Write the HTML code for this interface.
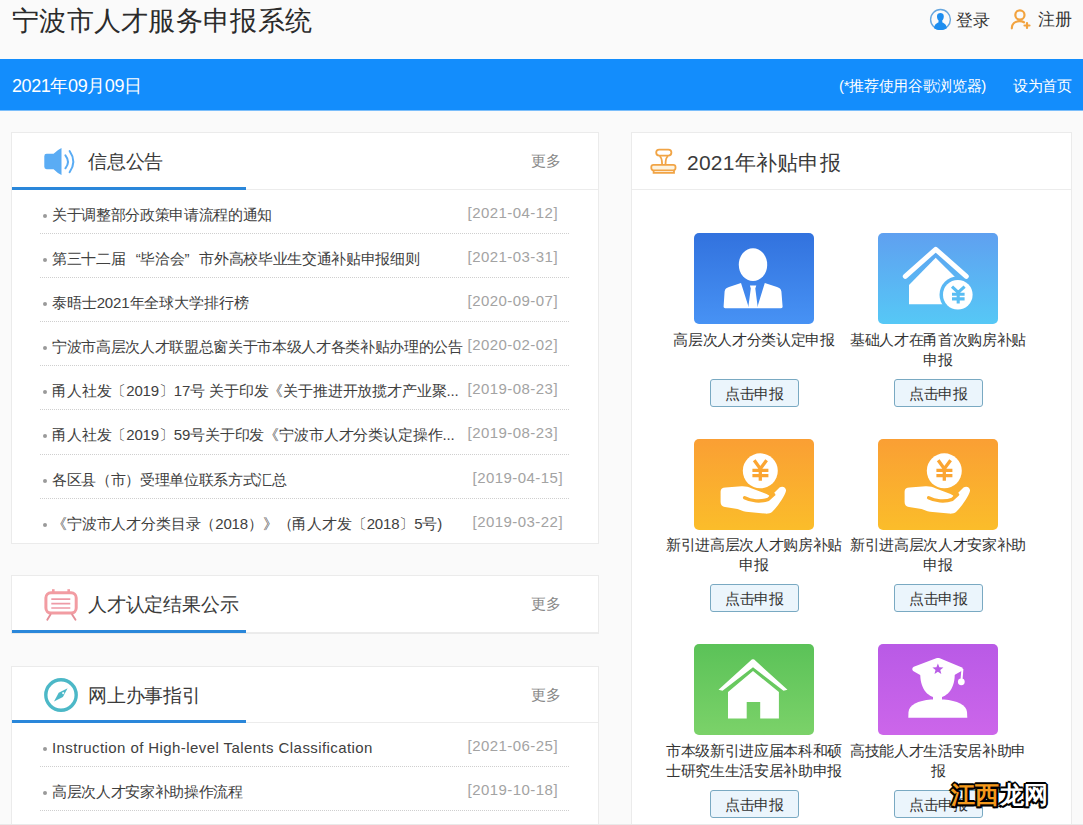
<!DOCTYPE html>
<html><head><meta charset="utf-8">
<style>
*{margin:0;padding:0;box-sizing:border-box}
html,body{width:1083px;height:825px;overflow:hidden}
body{background:#fafafa;font-family:"Liberation Sans",sans-serif;position:relative;color:#333}
.abs{position:absolute;white-space:nowrap}
#title{left:12px;top:3.5px;font-size:27px;letter-spacing:0.3px;line-height:34px;color:#2b2b2b}
#bar{position:absolute;left:0;top:59px;width:1083px;height:51px;background:#138dfc;color:#fff;box-shadow:0 1px 0 rgba(19,141,252,0.55)}
.panel{position:absolute;background:#fff;border:1px solid #ebebeb}
.ph{position:absolute;left:0;top:0;width:100%;height:57px;border-bottom:1px solid #ececec}
.ph .ul{position:absolute;left:0;bottom:-1px;width:234px;height:3px;background:#2a87da}
.ph .t{position:absolute;left:76px;top:14.5px;font-size:19px;letter-spacing:-0.2px;line-height:28px;color:#3a3a3a}
.ph .more{position:absolute;left:519px;top:17px;font-size:15px;letter-spacing:-0.33px;line-height:22px;color:#888}
.li{position:absolute;left:28px;width:529px;height:44px;border-bottom:1px dotted #cfcfcf}
.li .dot{position:absolute;left:3px;top:23.5px;width:4px;height:4px;border-radius:50%;background:#9a9a9a}
.li .tx{position:absolute;left:12px;top:14px;font-size:15px;letter-spacing:-0.33px;line-height:22px;color:#404040;white-space:nowrap}
.li .dt{position:absolute;right:11px;top:11.5px;letter-spacing:0.45px;font-size:15px;line-height:22px;color:#a3a3a3;white-space:nowrap}
.tile{position:absolute;width:120px;height:91px;border-radius:5px;overflow:hidden}
.lab{position:absolute;width:184px;text-align:center;font-size:15px;letter-spacing:-0.33px;line-height:20px;color:#333}
.btn{position:absolute;width:89px;height:28px;border:1px solid #79a9c2;border-radius:3px;background:#ebf5fc;font-size:15px;letter-spacing:-0.33px;line-height:27px;text-align:center;color:#333}
.q{display:inline-block;width:1em;text-align:right}.q2{text-align:left}
#wm{text-shadow:0 0 1px #000, -2px 0 0 #000, 2px 0 0 #000, 0 -2px 0 #000, 0 2px 0 #000, -1.5px -1.5px 0 #000, 1.5px -1.5px 0 #000, -1.5px 1.5px 0 #000, 1.5px 1.5px 0 #000}
</style></head><body>
<div id="title" class="abs">宁波市人才服务申报系统</div>
<div class="abs" style="left:956px;top:9px;font-size:17px;letter-spacing:0.3px;line-height:24px;color:#333">登录</div>
<div class="abs" style="left:1038px;top:8px;font-size:17px;letter-spacing:0.3px;line-height:24px;color:#333">注册</div>
<div id="bar">
  <div class="abs" style="left:12px;top:15.5px;font-size:18px;letter-spacing:-0.4px;line-height:22px">2021年09月09日</div>
  <div class="abs" style="left:839px;top:16px;font-size:15px;letter-spacing:-0.33px;line-height:22px">(*推荐使用谷歌浏览器)</div>
  <div class="abs" style="left:1013px;top:16px;font-size:15px;letter-spacing:-0.33px;line-height:22px">设为首页</div>
</div>

<!-- panel 1 -->
<div class="panel" style="left:11px;top:132px;width:588px;height:412px">
  <div class="ph"><div class="ul"></div><div class="t">信息公告</div><div class="more">更多</div></div>
  <div class="li" style="top:57px"><div class="dot"></div><div class="tx">关于调整部分政策申请流程的通知</div><div class="dt">[2021-04-12]</div></div>
  <div class="li" style="top:101px"><div class="dot"></div><div class="tx">第三十二届<span class="q">“</span>毕洽会<span class="q q2">”</span>市外高校毕业生交通补贴申报细则</div><div class="dt">[2021-03-31]</div></div>
  <div class="li" style="top:145px"><div class="dot"></div><div class="tx" style="letter-spacing:-0.12px">泰晤士2021年全球大学排行榜</div><div class="dt">[2020-09-07]</div></div>
  <div class="li" style="top:189px"><div class="dot"></div><div class="tx">宁波市高层次人才联盟总窗关于市本级人才各类补贴办理的公告</div><div class="dt">[2020-02-02]</div></div>
  <div class="li" style="top:233px"><div class="dot"></div><div class="tx" style="letter-spacing:-0.16px">甬人社发〔2019〕17号 关于印发《关于推进开放揽才产业聚...</div><div class="dt">[2019-08-23]</div></div>
  <div class="li" style="top:277px;height:45px"><div class="dot"></div><div class="tx" style="letter-spacing:-0.16px">甬人社发〔2019〕59号关于印发《宁波市人才分类认定操作...</div><div class="dt">[2019-08-23]</div></div>
  <div class="li" style="top:322px"><div class="dot"></div><div class="tx">各区县（市）受理单位联系方式汇总</div><div class="dt" style="right:6px">[2019-04-15]</div></div>
  <div class="li" style="top:366px;border-bottom:0"><div class="dot"></div><div class="tx" style="letter-spacing:-0.16px">《宁波市人才分类目录（2018）》（甬人才发〔2018〕5号)</div><div class="dt" style="right:6px">[2019-03-22]</div></div>
</div>

<!-- panel 2 -->
<div class="panel" style="left:11px;top:575px;width:588px;height:59px">
  <div class="ph"><div class="ul"></div><div class="t">人才认定结果公示</div><div class="more">更多</div></div>
</div>

<!-- panel 3 -->
<div class="panel" style="left:11px;top:666px;width:588px;height:200px">
  <div class="ph" style="height:56px"><div class="ul"></div><div class="t">网上办事指引</div><div class="more">更多</div></div>
  <div class="li" style="top:56px"><div class="dot"></div><div class="tx" style="letter-spacing:0.42px">Instruction of High-level Talents Classification</div><div class="dt">[2021-06-25]</div></div>
  <div class="li" style="top:100px"><div class="dot"></div><div class="tx">高层次人才安家补助操作流程</div><div class="dt">[2019-10-18]</div></div>
</div>

<!-- right panel -->
<div class="panel" style="left:631px;top:132px;width:441px;height:720px">
  <div class="ph" style="border-bottom-color:#ececec"><div class="t" style="left:55px;top:15.5px;font-size:21px;letter-spacing:0.25px">2021年补贴申报</div></div>
</div>

<div class="tile" style="left:694px;top:233px;background:linear-gradient(#3272de,#4792f4)"></div>
<div class="tile" style="left:878px;top:233px;background:linear-gradient(#5fa0f0,#56c8f6)"></div>
<div class="tile" style="left:694px;top:439px;background:linear-gradient(#fa9f34,#fbbd2a)"></div>
<div class="tile" style="left:878px;top:439px;background:linear-gradient(#fa9f34,#fbbd2a)"></div>
<div class="tile" style="left:694px;top:644px;background:linear-gradient(#5bc258,#7bd269)"></div>
<div class="tile" style="left:878px;top:644px;background:linear-gradient(#b95ae6,#cc66ea)"></div>

<div class="lab" style="left:662px;top:329.5px">高层次人才分类认定申报</div>
<div class="lab" style="left:846px;top:329.5px">基础人才在甬首次购房补贴申报</div>
<div class="lab" style="left:662px;top:534.5px">新引进高层次人才购房补贴申报</div>
<div class="lab" style="left:846px;top:534.5px">新引进高层次人才安家补助申报</div>
<div class="lab" style="left:662px;top:740.5px">市本级新引进应届本科和硕士研究生生活安居补助申报</div>
<div class="lab" style="left:846px;top:740.5px">高技能人才生活安居补助申报</div>

<div class="btn" style="left:710px;top:379px">点击申报</div>
<div class="btn" style="left:894px;top:379px">点击申报</div>
<div class="btn" style="left:710px;top:584px">点击申报</div>
<div class="btn" style="left:894px;top:584px">点击申报</div>
<div class="btn" style="left:710px;top:790px">点击申报</div>
<div class="btn" style="left:894px;top:790px">点击申报</div>


<svg width="1083" height="825" viewBox="0 0 1083 825" style="position:absolute;left:0;top:0">
<defs>
 <mask id="coinmask"><rect x="878" y="233" width="120" height="91" fill="#fff"/><circle cx="957.8" cy="294.7" r="18.3" fill="#000"/></mask>
</defs>
<!-- login icon -->
<circle cx="940.5" cy="19.4" r="9.9" fill="none" stroke="#66a6de" stroke-width="1.4"/>
<path fill="#1d8ef0" d="M934,28.3 C934.3,24.6 936.5,23.4 938.4,22.5 L938.6,20.6 C937.5,19.6 937,18 937,16.3 C937,13.9 938.5,12.9 940.4,12.9 C942.3,12.9 943.8,13.9 943.8,16.3 C943.8,18 943.3,19.6 942.2,20.6 L942.4,22.5 C944.3,23.4 946.6,24.6 946.9,28.3 C945,29.6 942.8,30.1 940.4,30.1 C938,30.1 935.8,29.6 934,28.3 Z"/>
<!-- register icon -->
<g fill="none" stroke="#f2a33f" stroke-width="2.2" stroke-linecap="round">
 <circle cx="1019.9" cy="15" r="4.6"/>
 <path d="M1011.8,28.3 C1011.8,24 1015,21.2 1019.5,21.2 C1021.3,21.2 1022.8,21.6 1024,22.3"/>
 <path d="M1024.5,25.5 H1029.5 M1027,23 V28"/>
</g>
<!-- speaker -->
<g fill="#5aacf4">
 <path d="M44.3,156.2 Q44.3,153.8 46.6,153.8 L53.6,153.8 Q57.5,149.8 61.5,148 L61.5,175 Q57.5,173.2 53.6,169.2 L46.6,169.2 Q44.3,169.2 44.3,166.8 Z"/>
</g>
<g fill="none" stroke="#5aacf4" stroke-width="2" stroke-linecap="round">
 <path d="M65.4,155.3 Q70.6,161.8 65.4,168.3"/>
 <path d="M69.6,151 Q77,161.6 69.6,172.3"/>
</g>
<!-- tv -->
<g fill="none" stroke="#f29ca2">
 <rect x="45.9" y="592.8" width="30.3" height="20.3" rx="5" stroke-width="3"/>
 <path d="M51.3,599.1 H70.3 M51.3,603.6 H70.3 M51.3,608 H70.3" stroke-width="1.6" stroke="#ee9aa6"/>
 <path d="M50.5,614.5 L47.3,619.8 M72.1,614.5 L75.5,619.8" stroke-width="1.9" stroke-linecap="round" stroke="#e48f98"/>
</g>
<rect x="52" y="589.2" width="2.6" height="3" fill="#f29ca2"/>
<rect x="67.4" y="589.2" width="2.6" height="3" fill="#f29ca2"/>
<!-- compass -->
<circle cx="61" cy="695" r="15.2" fill="none" stroke="#4cb8c7" stroke-width="3.4"/>
<path fill="#4cb8c7" d="M54,701.6 L58.7,692.8 L67.6,688.3 L62.9,697 Z"/>
<circle cx="63.2" cy="693.2" r="1.1" fill="#e8fafc"/>
<!-- stamp -->
<g fill="none" stroke="#f1a445" stroke-width="1.8">
 <rect x="656.2" y="149.6" width="15.2" height="6" rx="3"/>
 <path d="M659.5,156.2 C661.6,157.2 662.1,159.5 662.1,164.3 M668.1,156.2 C666,157.2 665.5,159.5 665.5,164.3"/>
 <rect x="651.3" y="164.9" width="24.2" height="5.4" rx="2.2" fill="#fdf3df"/>
 <path d="M653.6,170.6 V172.8 H674 V170.6" stroke-width="1.8"/>
</g>
<!-- tile gradients -->
<defs>
 <linearGradient id="g1" x1="0" y1="0" x2="0" y2="1"><stop offset="0" stop-color="#3272de"/><stop offset="1" stop-color="#4693f4"/></linearGradient>
</defs>
<!-- tile1 person -->
<g fill="#fff">
 <ellipse cx="753" cy="264.7" rx="14.2" ry="16.4"/>
 <path d="M723.6,306.5 L724.6,291.5 C725,289 726.5,288 729,287.1 L741,283 L748.6,307 L757.4,307 L764.8,283 L777,287.1 C779.5,288 781,289 781.4,291.5 L782.6,306.5 C782.6,307.6 782,308.2 781,308.2 L725.2,308.2 C724.2,308.2 723.6,307.6 723.6,306.5 Z"/>
 <path d="M749.9,285.5 L756.3,285.5 L755.3,288.5 L757.8,308 L748.2,308 L750.8,288.5 Z"/>
</g>
<!-- tile2 house coin -->
<g fill="#fff">
 <path d="M905.3,276.4 L935.7,249.3 L966.3,276.4" fill="none" stroke="#fff" stroke-width="5" stroke-linecap="round" stroke-linejoin="round"/>
 <path mask="url(#coinmask)" d="M909,304.3 L909,285 L935.7,257.8 L962,284 L962,304.3 Z"/>
 <circle cx="957.8" cy="294.7" r="14.8"/>
</g>
<g fill="none" stroke="#59bdf3" stroke-width="3.1" stroke-linecap="round">
 <path d="M952,286.6 L958.2,292.4 L964.6,286.6 M958.2,292.4 V303.6 M952,294.2 H964.6 M952,298.9 H964.6" stroke-linecap="butt"/>
</g>
<!-- tile3/4 coin hand -->
<g id="hand">
 <circle cx="760.3" cy="470.8" r="17.5" fill="#fff"/>
 <g fill="none" stroke="#fba532" stroke-width="3.3">
  <path d="M754.2,460.2 L760.3,468.8 L766.6,460.2 M760.3,468.8 V480.8 M752.4,470.4 H768.4 M752.4,475.6 H768.4"/>
 </g>
 <path fill="#fff" d="M720.6,491.5 C720.6,488.6 722.5,487.6 725.5,487.4 L741.5,486.3 C745.5,486.1 748.5,487 752,488.6 L766.5,494 C768.5,494.8 769.5,495.8 770,497 L779.5,487.6 C782.5,485.4 786.8,487.6 785.9,491.3 C784.8,495.5 778.5,506 772,512 C770.5,513.3 768,513.8 765,513.6 L746,511.8 C742.5,511.4 740.5,509.6 737.5,509 L725,507 C722.2,506.6 720.6,505 720.6,502 Z"/>
 <path fill="none" stroke="#fbaf30" stroke-width="3.4" stroke-linecap="round" d="M744.6,497.7 C751,501 760.5,502.2 768.3,499.3 L773.6,494.6"/>
</g>
<use href="#hand" x="184" y="0"/>
<!-- tile5 house -->
<g fill="#fff">
 <path d="M718.5,689.8 L751.8,659.6 Q753,658.8 754.2,659.6 L787.5,689.8 L783.5,690.8 L753,667.3 L722.5,690.8 Z"/>
 <path d="M728,718.6 L728,691.9 L753,671.1 L778.9,691.9 L778.9,718.6 L760.2,718.6 L760.2,702 L746.7,702 L746.7,718.6 Z"/>
</g>
<!-- tile6 graduate -->
<g fill="#fff">
 <path d="M908.3,717.7 L908.5,712 C909,705 918,700.5 931,699.5 L944,699.5 C957,700.5 966.5,705 967,712 L967.3,717.7 Z"/>
 <path d="M920.3,673 C919.8,687 926.5,697.2 937.5,697.8 C948.5,697.2 955.2,687 954.7,673 Z"/><rect x="933" y="694" width="9" height="7"/>
 <path d="M913.8,666.8 L936.2,658.3 C937.4,657.9 938.6,657.9 939.8,658.3 L962.6,667.8 L962.8,670.2 L954,675.2 L921,675.5 L914,671.6 C911.8,670.6 911.8,667.8 913.8,666.8 Z"/>
 <path d="M962.4,669 L961.6,679" stroke="#fff" stroke-width="2" fill="none"/>
 <circle cx="961.3" cy="681.8" r="3.4"/>
</g>
<path fill="#b95ce6" d="M937.90,663.50 L939.37,667.28 L943.42,667.51 L940.28,670.07 L941.31,673.99 L937.90,671.80 L934.49,673.99 L935.52,670.07 L932.38,667.51 L936.43,667.28 Z"/>
</svg>
<div style="position:absolute;left:0;top:824px;width:1083px;height:1px;background:#e9e9e9"></div>
<div class="abs" id="wm" style="left:951px;top:779px;font-size:24px;line-height:32px;font-weight:bold;letter-spacing:0.3px"><span style="color:#f4991c">江西</span><span style="color:#fff">龙网</span></div>
</body></html>
